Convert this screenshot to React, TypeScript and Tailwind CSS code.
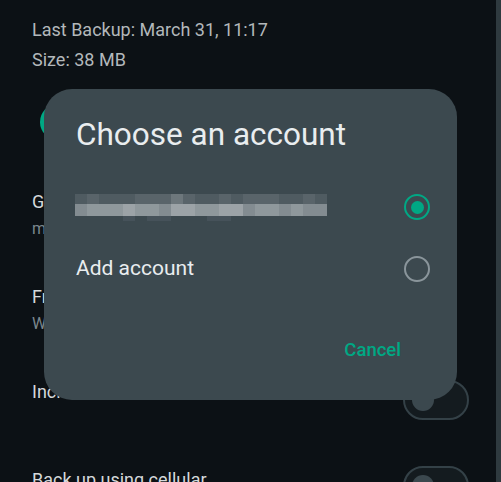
const shades = [
  'bg-[#3c494f]',
  'bg-[#46525a]',
  'bg-[#4f5b61]',
  'bg-[#59646a]',
  'bg-[#6d777c]',
  'bg-[#838c91]',
  'bg-[#8f989c]',
  'bg-[#9ca3a7]',
]

// pixelated e-mail address, one digit per 12px block
const blurRows = [
  { h: 'h-[10px]', cells: '232223334322323332232' },
  { h: 'h-[12px]', cells: '566676657766775665655' },
  { h: 'h-[5px]', cells: '000010110001100000000' },
]

const Toggle = () => (
  <div className="flex h-[40px] w-[66px] items-center rounded-full border-2 border-[#344147] bg-[#141b1f]">
    <div className="ml-[7px] h-[22px] w-[22px] rounded-full bg-[#3b484e]" />
  </div>
)

const Radio = ({ checked }: { checked?: boolean }) =>
  checked ? (
    <div className="flex h-[26px] w-[26px] items-center justify-center rounded-full border-[2.5px] border-[#00a884]">
      <div className="h-[13px] w-[13px] rounded-full bg-[#00a884]" />
    </div>
  ) : (
    <div className="h-[26px] w-[26px] rounded-full border-[2.5px] border-[#8a959b]" />
  )

const App = () => {
  return (
    <div
      className="relative flex h-[482px] w-[501px] overflow-hidden bg-[#0c1115]"
      style={{ fontFamily: 'Roboto, "Noto Sans", sans-serif' }}
    >
      <div className="flex-1 pl-[32px] pr-[27px] pt-[15px]">
        <div className="text-[18px] leading-[30px] text-[#b3b8bb]">Last Backup: March 31, 11:17</div>
        <div className="text-[18px] leading-[30px] text-[#b3b8bb]">Size: 38 MB</div>
        <div className="ml-[8px] mt-[29px] flex h-[36px] w-[130px] items-center justify-center rounded-full bg-[#00a884] text-[16px] font-medium text-[#0c1115]">
          Back up
        </div>

        <div className="mt-[50px] h-[95px]">
          <div className="text-[18px] leading-[24px] text-[#d5d9db]">Google Account</div>
          <div className="mt-[4px] text-[16px] leading-[22px] text-[#7b878d]">myaccount@gmail.com</div>
        </div>
        <div className="h-[95px]">
          <div className="text-[18px] leading-[24px] text-[#d5d9db]">Frequency</div>
          <div className="mt-[4px] text-[16px] leading-[22px] text-[#7b878d]">Weekly</div>
        </div>
        <div className="flex h-[88px] items-start justify-between">
          <div className="text-[18px] leading-[24px] text-[#d5d9db]">Include videos</div>
          <Toggle />
        </div>
        <div className="flex h-[87px] items-start justify-between">
          <div className="text-[18px] leading-[24px] text-[#d5d9db]">Back up using cellular</div>
          <div className="-mt-[2px]">
            <Toggle />
          </div>
        </div>
      </div>
      <div className="w-[5px] bg-[#2f3a3f]" />

      {/* account chooser dialog */}
      <div className="absolute left-[44px] top-[89px] flex h-[311px] w-[413px] flex-col rounded-[28px] bg-[#3c494f] pt-[27px]">
        <div className="h-[38px] pl-[32px] text-[31.5px] leading-[38px] text-[#e9edef]">Choose an account</div>
        <div className="mt-[22px] flex h-[62px] items-center justify-between pl-[31px] pr-[27px]">
          <div className="flex flex-col">
            {blurRows.map((row, r) => (
              <div key={r} className={`flex ${row.h}`}>
                {row.cells.split('').map((c, i) => (
                  <div key={i} className={`w-[12px] ${shades[Number(c)]}`} />
                ))}
              </div>
            ))}
          </div>
          <Radio checked />
        </div>
        <div className="flex h-[62px] items-center justify-between pl-[32px] pr-[27px]">
          <div className="text-[21px] text-[#e9edef]">Add account</div>
          <Radio />
        </div>
        <div className="mt-[31px] flex h-[40px] items-center justify-end pr-[56px]">
          <div className="text-[18.5px] font-medium text-[#00a884]">Cancel</div>
        </div>
      </div>
    </div>
  )
}

export default App
